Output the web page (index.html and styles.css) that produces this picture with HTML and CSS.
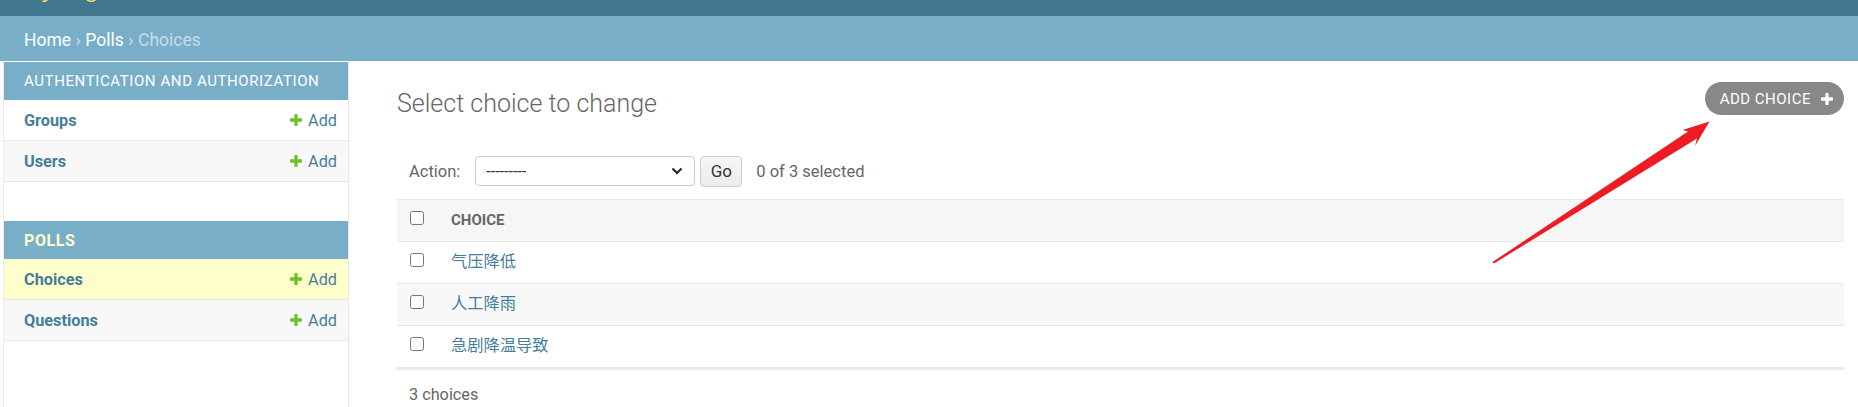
FILE: index.html
```html
<!DOCTYPE html>
<html lang="en">
<head>
<meta charset="utf-8">
<title>Select choice to change | Django site admin</title>
<link rel="stylesheet" href="styles.css">
</head>
<body>
<div class="header"><div class="branding">Django administration</div></div>
<div class="breadcrumbs"><a href="#">Home</a><span class="sep">›</span><a href="#">Polls</a><span class="sep">›</span><span class="current">Choices</span></div>
<div class="main">
  <nav class="sidebar">
    <div class="module">
      <div class="caption">Authentication and Authorization</div>
      <div class="model-row">
        <a class="model-name" href="#">Groups</a>
        <a class="addlink" href="#"><svg viewBox="192 128 1408 1408" class="plus"><path fill="#70bf2b" d="M1600 736v192q0 40-28 68t-68 28h-416v416q0 40-28 68t-68 28h-192q-40 0-68-28t-28-68v-416h-416q-40 0-68-28t-28-68v-192q0-40 28-68t68-28h416v-416q0-40 28-68t68-28h192q40 0 68 28t28 68v416h416q40 0 68 28t28 68z"/></svg>Add</a>
      </div>
      <div class="model-row alt">
        <a class="model-name" href="#">Users</a>
        <a class="addlink" href="#"><svg viewBox="192 128 1408 1408" class="plus"><path fill="#70bf2b" d="M1600 736v192q0 40-28 68t-68 28h-416v416q0 40-28 68t-68 28h-192q-40 0-68-28t-28-68v-416h-416q-40 0-68-28t-28-68v-192q0-40 28-68t68-28h416v-416q0-40 28-68t68-28h192q40 0 68 28t28 68v416h416q40 0 68 28t28 68z"/></svg>Add</a>
      </div>
    </div>
    <div class="module">
      <div class="caption current-app">Polls</div>
      <div class="model-row current">
        <a class="model-name" href="#">Choices</a>
        <a class="addlink" href="#"><svg viewBox="192 128 1408 1408" class="plus"><path fill="#70bf2b" d="M1600 736v192q0 40-28 68t-68 28h-416v416q0 40-28 68t-68 28h-192q-40 0-68-28t-28-68v-416h-416q-40 0-68-28t-28-68v-192q0-40 28-68t68-28h416v-416q0-40 28-68t68-28h192q40 0 68 28t28 68v416h416q40 0 68 28t28 68z"/></svg>Add</a>
      </div>
      <div class="model-row alt">
        <a class="model-name" href="#">Questions</a>
        <a class="addlink" href="#"><svg viewBox="192 128 1408 1408" class="plus"><path fill="#70bf2b" d="M1600 736v192q0 40-28 68t-68 28h-416v416q0 40-28 68t-68 28h-192q-40 0-68-28t-28-68v-416h-416q-40 0-68-28t-28-68v-192q0-40 28-68t68-28h416v-416q0-40 28-68t68-28h192q40 0 68 28t28 68v416h416q40 0 68 28t28 68z"/></svg>Add</a>
      </div>
    </div>
  </nav>
  <div class="content">
    <div class="content-head">
      <h1>Select choice to change</h1>
      <a class="object-tool" href="#">Add choice<svg viewBox="192 128 1408 1408" class="plus-w"><path fill="#fff" d="M1600 736v192q0 40-28 68t-68 28h-416v416q0 40-28 68t-68 28h-192q-40 0-68-28t-28-68v-416h-416q-40 0-68-28t-28-68v-192q0-40 28-68t68-28h416v-416q0-40 28-68t68-28h192q40 0 68 28t28 68v416h416q40 0 68 28t28 68z"/></svg></a>
    </div>
    <div class="actions">
      <span class="action-label">Action:</span>
      <div class="select">
        <span>---------</span>
        <svg class="chev" viewBox="0 0 12 8"><path d="M1.5 1.5l4.5 4.5 4.5-4.5" fill="none" stroke="#222" stroke-width="2"/></svg>
      </div>
      <button class="go">Go</button>
      <span class="counter">0 of 3 selected</span>
    </div>
    <div class="results">
      <div class="row head">
        <span class="cb-cell"><input type="checkbox"></span>
        <span class="col-title">Choice</span>
      </div>
      <div class="row">
        <span class="cb-cell"><input type="checkbox"></span>
        <a class="item" href="#">气压降低</a>
      </div>
      <div class="row alt">
        <span class="cb-cell"><input type="checkbox"></span>
        <a class="item" href="#">人工降雨</a>
      </div>
      <div class="row last">
        <span class="cb-cell"><input type="checkbox"></span>
        <a class="item" href="#">急剧降温导致</a>
      </div>
    </div>
    <div class="paginator">3 choices</div>
  </div>
</div>
<svg class="annotation" viewBox="0 0 1858 407" width="1858" height="407">
  <polygon fill="#ed1c24" points="1492.5,262 1688,131.5 1682.5,130 1709.5,121.5 1695,146 1697,138.5 1494,263.5"/>
</svg>
</body>
</html>
```
FILE: styles.css
```css
* { box-sizing: border-box; }
html, body { margin: 0; padding: 0; }
body {
  font-family: Roboto, "Noto Sans CJK SC", sans-serif;
  color: #333;
  background: #fff;
  width: 1858px;
  height: 407px;
  overflow: hidden;
  position: relative;
}
a { text-decoration: none; }

.header {
  height: 16px;
  background: #417690;
  overflow: hidden;
  padding-left: 24px;
}
.branding {
  margin-top: -29px;
  font-size: 30px;
  line-height: 30px;
  font-weight: 300;
  color: #f5dd5d;
}

.breadcrumbs {
  height: 45px;
  background: #79aec8;
  padding: 2px 24px 0 24px;
  display: flex;
  align-items: center;
  font-size: 17.5px;
  color: #c4dce8;
}
.breadcrumbs a { color: #fff; }
.breadcrumbs .sep { margin: 0 4.5px; color: #c4dce8; }

.main { display: flex; }

.sidebar {
  flex: 0 0 346px;
  margin-left: 3px;
  border-left: 1px solid #ececec;
  border-right: 1px solid #e8e8e8;
  padding-top: 1px;
  height: 346px;
}
.module { margin-bottom: 39px; }
.caption {
  height: 38px;
  background: #79aec8;
  color: #fff;
  padding-left: 20px;
  display: flex;
  align-items: center;
  font-size: 15px;
  text-transform: uppercase;
  letter-spacing: 0.6px;
}
.caption.current-app { color: #ffc; font-weight: 700; font-size: 16px; }
.model-row {
  height: 41px;
  border-bottom: 1px solid #e8e8e8;
  display: flex;
  align-items: center;
  justify-content: space-between;
  padding: 0 11px 0 20px;
  font-size: 16.25px;
}
.model-row.alt { background: #f8f8f8; }
.model-row.current { background: #ffc; }
.model-name { color: #447e9b; font-weight: 700; }
.addlink { color: #447e9b; display: flex; align-items: center; }
.plus { width: 12px; height: 12px; margin-right: 6px; }

.content {
  flex: 1;
  padding: 21px 14px 0 48px;
}
.content-head {
  display: flex;
  justify-content: space-between;
  align-items: flex-start;
}
h1 {
  margin: 7px 0 0 0;
  font-size: 25px;
  line-height: 30px;
  font-weight: 300;
  color: #666;
}
.object-tool {
  height: 33px;
  border-radius: 17px;
  background: #888;
  color: #fff;
  display: flex;
  align-items: center;
  padding: 0 11px 0 15px;
  font-size: 15px;
  text-transform: uppercase;
  letter-spacing: 0.5px;
}
.plus-w { width: 12px; height: 12px; margin-left: 10px; }

.actions {
  margin-top: 28px;
  padding: 9px 12px 13px 12px;
  display: flex;
  align-items: center;
  height: 52px;
  font-size: 16.5px;
  color: #666;
}
.action-label { margin-right: 15px; }
.select {
  width: 220px;
  height: 30px;
  border: 1px solid #ccc;
  border-radius: 4px;
  display: flex;
  align-items: center;
  justify-content: space-between;
  padding: 0 11px 0 10px;
  color: #333;
  font-size: 16px;
}
.chev { width: 12px; height: 8px; }
.go {
  margin-left: 5px;
  width: 42px;
  height: 31px;
  border: 1px solid #ccc;
  border-radius: 4px;
  background: linear-gradient(#f6f6f6, #ececec);
  font-family: Roboto, sans-serif;
  font-size: 17px;
  color: #333;
  padding: 0;
}
.counter { margin-left: 14px; }

.results {
  border-top: 1px solid #e8e8e8;
}
.row {
  height: 42px;
  border-bottom: 1px solid #e8e8e8;
  display: flex;
  align-items: center;
}
.row.head { background: #f6f6f6; }
.row.alt { background: #f8f8f8; }
.row.last { height: 44px; border-bottom: 3px solid #eaeaea; }
.cb-cell {
  width: 54px;
  padding-left: 13px;
  display: flex;
  align-items: center;
}
.cb-cell input {
  margin: -3px 0 3px 0;
  width: 14px;
  height: 14px;
}
.col-title {
  font-size: 15px;
  font-weight: 700;
  text-transform: uppercase;
  color: #666;
  margin-bottom: 2px;
}
.item {
  color: #447e9b;
  font-size: 16.25px;
  font-family: "Noto Sans CJK SC", sans-serif;
  margin-bottom: 5px;
}
.paginator {
  margin-right: -14px;
  padding: 15px 12px 0 12px;
  font-size: 16.25px;
  color: #666;
}

.annotation {
  position: absolute;
  left: 0;
  top: 0;
  pointer-events: none;
}
```
